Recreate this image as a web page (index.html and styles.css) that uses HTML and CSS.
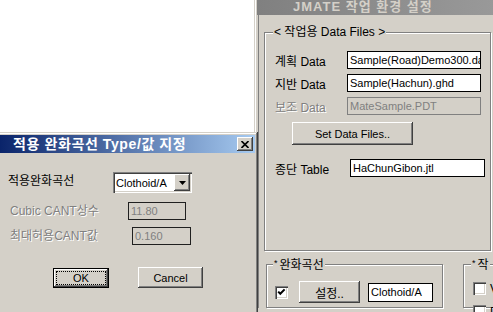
FILE: index.html
```html
<!DOCTYPE html>
<html lang="ko">
<head>
<meta charset="utf-8">
<title>JMATE</title>
<link rel="stylesheet" href="styles.css">
</head>
<body>
<div class="screen">
  <div class="win main-win">
    <div class="titlebar inactive"><span class="title-text main-title">JMATE 작업 환경 설정</span></div>
    <div class="client">
      <fieldset class="group files">
        <legend>&lt; 작업용 Data Files &gt;</legend>
        <div class="frow"><span class="lbl">계획 Data</span><div class="edit w134">Sample(Road)Demo300.da</div></div>
        <div class="frow"><span class="lbl">지반 Data</span><div class="edit w134">Sample(Hachun).ghd</div></div>
        <div class="frow"><span class="lbl dis-label">보조 Data</span><div class="edit w134 disabled">MateSample.PDT</div></div>
        <div class="btn setfiles">Set Data Files..</div>
        <div class="frow table-row"><span class="lbl lbl-wide">종단 Table</span><div class="edit w135">HaChunGibon.jtl</div></div>
      </fieldset>
      <div class="bottom">
        <fieldset class="group curve">
          <legend><span class="star">*</span>완화곡선</legend>
          <div class="crow">
            <span class="check"><svg width="13" height="13" viewBox="0 0 13 13"><path d="M3.2 5.6 L5.3 7.8 L9.6 3.4" fill="none" stroke="#000" stroke-width="2"/></svg></span>
            <div class="btn btn-set">설정..</div>
            <div class="edit edit-curve">Clothoid/A</div>
          </div>
        </fieldset>
        <fieldset class="group work">
          <legend><span class="star">*</span>작</legend>
          <div class="cbrow"><span class="check"></span><span>V</span></div>
          <div class="cbrow"><span class="check"></span><span>D</span></div>
        </fieldset>
      </div>
    </div>
  </div>

  <div class="win dlg">
    <div class="titlebar active">
      <span class="title-text dlg-title">적용 완화곡선 Type/값 지정</span>
      <span class="btn close"><svg width="8" height="7" viewBox="0 0 8 7"><path d="M0.5 0 L7.5 7 M7.5 0 L0.5 7" stroke="#000" stroke-width="1.6"/></svg></span>
    </div>
    <div class="dbody">
      <div class="drow">
        <span class="dl dl1">적용완화곡선</span>
        <div class="combo">
          <span class="combo-text">Clothoid/A</span>
          <span class="btn combo-btn"><svg width="7" height="4" viewBox="0 0 7 4"><polygon points="0,0 7,0 3.5,4" fill="#000"/></svg></span>
        </div>
      </div>
      <div class="drow drow2">
        <span class="dl dl2 dis-label">Cubic CANT상수</span>
        <div class="edit ro w58">11.80</div>
      </div>
      <div class="drow drow3">
        <span class="dl dl3 dis-label">최대허용CANT값</span>
        <div class="edit ro w59">0.160</div>
      </div>
      <div class="dbtns">
        <div class="btn ok"><span class="focus">OK</span></div>
        <div class="btn cancel">Cancel</div>
      </div>
    </div>
  </div>
</div>
</body>
</html>
```
FILE: styles.css
```css
body {
  margin: 0;
  background: #fff;
  font-family: "Liberation Sans", "Noto Sans CJK KR", sans-serif;
  font-size: 12px;
  color: #000;
}

.screen {
  position: relative;
  width: 493px;
  height: 312px;
  overflow: hidden;
  background: #fff;
}

.win {
  position: absolute;
  background: #d4d0c8;
  padding: 3px;
  box-sizing: border-box;
}

.main-win {
  left: 254px;
  top: -6px;
  width: 272px;
  height: 330px;
  box-shadow: inset 1px 1px 0 #d4d0c8, inset 2px 2px 0 #fff;
}

.titlebar {
  height: 18px;
  display: flex;
  align-items: center;
  box-sizing: border-box;
  white-space: nowrap;
}

.title-text {
  font-weight: bold;
  font-size: 14px;
  line-height: 16px;
}

.main-title {
  font-size: 13px;
  letter-spacing: 1px;
}

.dlg-title {
  letter-spacing: 0.6px;
}

.inactive {
  background: linear-gradient(to right, #808080, #9c9c9c);
  color: #d4d0c8;
  padding: 1px 0 0 36px;
}

.client {
  margin-left: 1px;
  border-left: 1px solid #808080;
  padding-left: 5px;
  display: flex;
  flex-direction: column;
  align-items: flex-start;
}

.group {
  margin: 0;
  border: 1px solid #808080;
  box-shadow: inset 1px 1px 0 #fff, 1px 1px 0 #fff;
  box-sizing: border-box;
  min-width: 0;
}

.group legend {
  background: #d4d0c8;
  padding: 0 1px;
  margin-left: -2px;
  line-height: 14px;
  font-size: 12px;
  white-space: nowrap;
}

.star {
  font-size: 9px;
  vertical-align: 3px;
  margin-right: 2px;
}

.files {
  margin-top: 10px;
  width: 227px;
  height: 226px;
  padding: 12px 0 0 10px;
}

.frow {
  display: flex;
  align-items: center;
  height: 18px;
  margin-bottom: 5px;
}

.lbl {
  width: 72px;
  flex: none;
  white-space: nowrap;
}

.lbl-wide {
  width: 75px;
}

.edit {
  height: 18px;
  box-sizing: border-box;
  border: 1px solid #000;
  background: #fff;
  font-size: 11px;
  line-height: 16px;
  padding: 0 2px;
  white-space: nowrap;
  overflow: hidden;
  flex: none;
}

.w134 { width: 134px; }
.w135 { width: 135px; }
.w58 { width: 58px; }
.w59 { width: 59px; }

.edit.disabled {
  background: #d4d0c8;
  border-color: #808080;
  color: #808080;
}

.edit.ro {
  background: #d4d0c8;
  border-color: #202020;
  color: #808080;
}

.dis-label {
  color: #808080;
  text-shadow: 1px 1px 0 #fff;
}

.btn {
  display: flex;
  align-items: center;
  justify-content: center;
  background: #d4d0c8;
  box-sizing: border-box;
  box-shadow: inset -1px -1px 0 #404040, inset 1px 1px 0 #fff, inset -2px -2px 0 #808080, inset 2px 2px 0 #d4d0c8;
  font-size: 11px;
  white-space: nowrap;
  flex: none;
}

.setfiles {
  margin: 7px 0 0 17px;
  width: 121px;
  height: 23px;
}

.table-row {
  margin-top: 14px;
}

.bottom {
  display: flex;
  margin-top: 5px;
}

.curve {
  width: 177px;
  height: 52px;
  margin-left: 2px;
  padding: 9px 0 0 8px;
}

.crow {
  display: flex;
  align-items: center;
  height: 22px;
}

.check {
  width: 13px;
  height: 13px;
  box-sizing: border-box;
  background: #fff;
  box-shadow: inset 1px 1px 0 #808080, inset 2px 2px 0 #404040, inset -1px -1px 0 #fff, inset -2px -2px 0 #d4d0c8;
  flex: none;
  display: flex;
}

.btn-set {
  margin-left: 11px;
  width: 61px;
  height: 22px;
  font-size: 12px;
}

.edit-curve {
  margin-left: 8px;
  width: 65px;
  height: 19px;
  line-height: 17px;
}

.work {
  width: 80px;
  height: 52px;
  margin-left: 20px;
  padding: 10px 0 0 9px;
}

.cbrow {
  display: flex;
  align-items: center;
  gap: 4px;
  height: 13px;
  margin-bottom: 10px;
}

/* dialog */
.dlg {
  left: -3px;
  top: 132px;
  width: 261px;
  height: 200px;
  box-shadow: inset -1px -1px 0 #404040, inset 1px 1px 0 #d4d0c8, inset -2px -2px 0 #808080, inset 2px 2px 0 #fff;
}

.active {
  background: linear-gradient(to right, #0a246a, #a6caf0);
  color: #fff;
  padding: 0 2px 0 13px;
  justify-content: space-between;
}

.close {
  width: 16px;
  height: 14px;
}

.dbody {
  padding: 19px 0 0 8px;
  display: flex;
  flex-direction: column;
  align-items: flex-start;
}

.drow {
  display: flex;
  align-items: center;
}

.dl {
  flex: none;
  white-space: nowrap;
  line-height: 14px;
}

.dl1 { width: 105px; margin-top: -3px; }
.dl2 { width: 118px; padding-left: 2px; }
.dl3 { width: 122px; padding-left: 2px; }

.drow2 { margin-top: 9px; }
.drow3 { margin-top: 7px; }

.combo {
  width: 79px;
  height: 21px;
  box-sizing: border-box;
  background: #fff;
  box-shadow: inset 1px 1px 0 #808080, inset 2px 2px 0 #404040, inset -1px -1px 0 #fff, inset -2px -2px 0 #d4d0c8;
  display: flex;
  align-items: center;
  justify-content: space-between;
  padding: 2px;
}

.combo-text {
  font-size: 11px;
  padding-left: 1px;
}

.combo-btn {
  width: 16px;
  height: 17px;
}

.dbtns {
  display: flex;
  margin-top: 22px;
}

.ok {
  margin-left: 45px;
  width: 56px;
  border: 1px solid #000;
  padding: 2px;
  margin-top: 1px;
  height: 20px;
}

.focus {
  align-self: stretch;
  flex: 1;
  display: flex;
  align-items: center;
  justify-content: center;
  border: 1px dotted #000;
}

.cancel {
  margin-left: 29px;
  width: 65px;
  height: 21px;
}
```
